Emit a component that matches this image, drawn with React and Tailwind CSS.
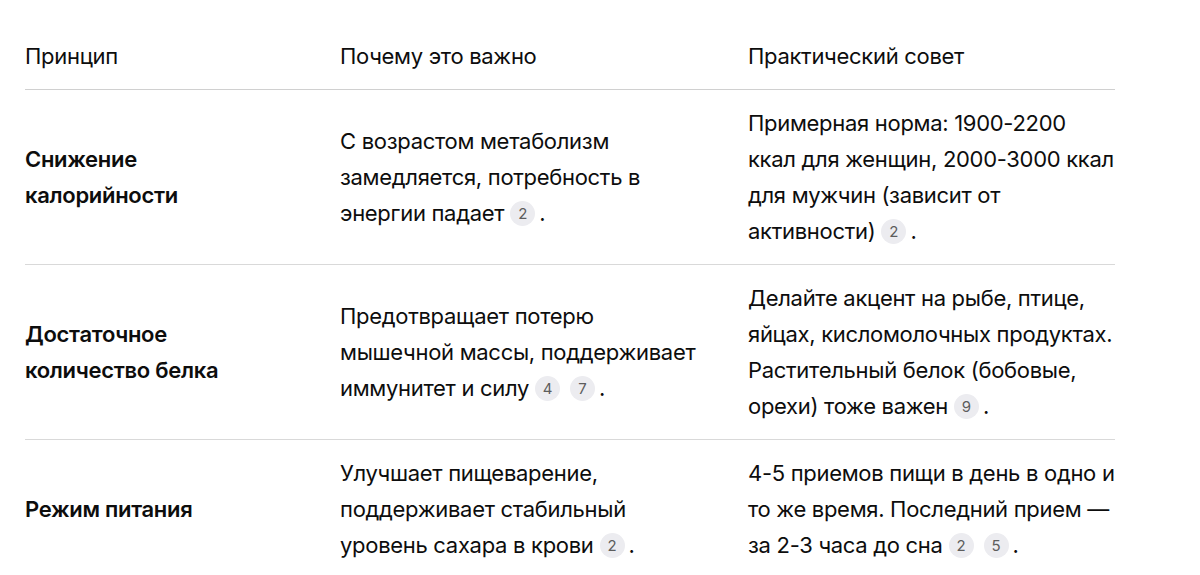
import React from "react";

const Badge = ({ n }) => (
  <span className="inline-flex items-center justify-center w-[25px] h-[25px] rounded-full bg-[#ececf0] text-[15px] text-[#5d5d5d] align-[2px] ml-[6px] mr-[4px] leading-none tracking-normal">
    {n}
  </span>
);

const rows = [
  {
    p: "Снижение калорийности",
    why: (
      <>
        С возрастом метаболизм замедляется, потребность в энергии падает<Badge n="2" />.
      </>
    ),
    tip: (
      <>
        Примерная норма: 1900-2200 ккал для женщин, 2000-3000 ккал для мужчин (зависит от активности)<Badge n="2" />.
      </>
    ),
  },
  {
    p: "Достаточное количество белка",
    why: (
      <>
        Предотвращает потерю мышечной массы, поддерживает иммунитет и силу<Badge n="4" />
        <Badge n="7" />.
      </>
    ),
    tip: (
      <>
        Делайте акцент на рыбе, птице, яйцах, кисломолочных продуктах. Растительный белок (бобовые, орехи) тоже важен<Badge n="9" />.
      </>
    ),
  },
  {
    p: "Режим питания",
    why: (
      <>
        Улучшает пищеварение, поддерживает стабильный уровень сахара в крови<Badge n="2" />.
      </>
    ),
    tip: (
      <>
        4-5 приемов пищи в день в одно и то же время. Последний прием — за 2-3 часа до сна<Badge n="2" />
        <Badge n="5" />.
      </>
    ),
  },
];

export default function App() {
  return (
    <div
      className="w-[1200px] h-[575px] overflow-hidden bg-white text-[#0d0d0d] pt-[23px] pl-[25px]"
      style={{ fontFamily: "Inter, 'Noto Sans', sans-serif" }}
    >
      <table className="w-[1090px] border-collapse text-[22px] leading-[36px] tracking-[-0.3px] table-fixed">
        <colgroup>
          <col className="w-[315px]" />
          <col className="w-[408px]" />
          <col className="w-[367px]" />
        </colgroup>
        <thead>
          <tr className="border-b border-[#d0d0d0]">
            <th className="text-left font-normal py-[15px] pr-6">Принцип</th>
            <th className="text-left font-normal py-[15px] pr-6">Почему это важно</th>
            <th className="text-left font-normal py-[15px]">Практический совет</th>
          </tr>
        </thead>
        <tbody>
          {rows.map((r, i) => (
            <tr key={i} className={i < rows.length - 1 ? "border-b border-[#d9d9d9]" : ""}>
              <td className="font-semibold py-[15px] pr-[80px] align-middle">{r.p}</td>
              <td className="py-[15px] pr-[48px] align-middle">{r.why}</td>
              <td className="py-[15px] align-middle">{r.tip}</td>
            </tr>
          ))}
        </tbody>
      </table>
    </div>
  );
}
